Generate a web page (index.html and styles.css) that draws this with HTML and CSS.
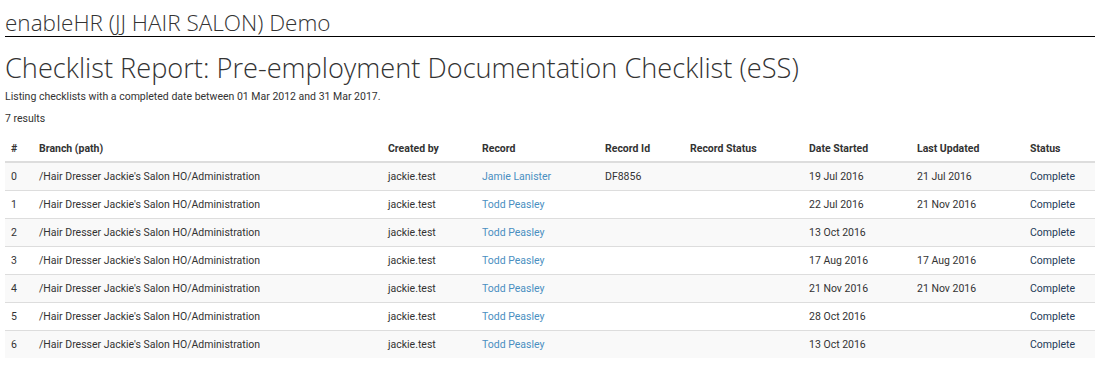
FILE: index.html
```html
<!DOCTYPE html>
<html>
<head>
<meta charset="utf-8">
<link rel="stylesheet" href="styles.css">
</head>
<body>
<h1 class="site-title">enableHR (JJ HAIR SALON) Demo</h1>
<h2 class="report-title">Checklist Report: Pre-employment Documentation Checklist (eSS)</h2>
<p class="desc">Listing checklists with a completed date between 01 Mar 2012 and 31 Mar 2017.</p>
<p class="count">7 results</p>
<table class="report">
<thead>
<tr>
<th class="c-num">#</th>
<th class="c-branch">Branch (path)</th>
<th class="c-created">Created by</th>
<th class="c-record">Record</th>
<th class="c-recid">Record Id</th>
<th class="c-recstatus">Record Status</th>
<th class="c-started">Date Started</th>
<th class="c-updated">Last Updated</th>
<th class="c-status">Status</th>
</tr>
</thead>
<tbody>
<tr><td>0</td><td>/Hair Dresser Jackie's Salon HO/Administration</td><td>jackie.test</td><td><a class="rec">Jamie Lanister</a></td><td>DF8856</td><td></td><td>19 Jul 2016</td><td>21 Jul 2016</td><td><a class="st">Complete</a></td></tr>
<tr><td>1</td><td>/Hair Dresser Jackie's Salon HO/Administration</td><td>jackie.test</td><td><a class="rec">Todd Peasley</a></td><td></td><td></td><td>22 Jul 2016</td><td>21 Nov 2016</td><td><a class="st">Complete</a></td></tr>
<tr><td>2</td><td>/Hair Dresser Jackie's Salon HO/Administration</td><td>jackie.test</td><td><a class="rec">Todd Peasley</a></td><td></td><td></td><td>13 Oct 2016</td><td></td><td><a class="st">Complete</a></td></tr>
<tr><td>3</td><td>/Hair Dresser Jackie's Salon HO/Administration</td><td>jackie.test</td><td><a class="rec">Todd Peasley</a></td><td></td><td></td><td>17 Aug 2016</td><td>17 Aug 2016</td><td><a class="st">Complete</a></td></tr>
<tr><td>4</td><td>/Hair Dresser Jackie's Salon HO/Administration</td><td>jackie.test</td><td><a class="rec">Todd Peasley</a></td><td></td><td></td><td>21 Nov 2016</td><td>21 Nov 2016</td><td><a class="st">Complete</a></td></tr>
<tr><td>5</td><td>/Hair Dresser Jackie's Salon HO/Administration</td><td>jackie.test</td><td><a class="rec">Todd Peasley</a></td><td></td><td></td><td>28 Oct 2016</td><td></td><td><a class="st">Complete</a></td></tr>
<tr><td>6</td><td>/Hair Dresser Jackie's Salon HO/Administration</td><td>jackie.test</td><td><a class="rec">Todd Peasley</a></td><td></td><td></td><td>13 Oct 2016</td><td></td><td><a class="st">Complete</a></td></tr>
</tbody>
</table>
</body>
</html>
```
FILE: styles.css
```css
html, body { margin: 0; padding: 0; background: #fff; }
body {
  padding: 0 0 0 5px;
  font-family: Roboto, "Liberation Sans", sans-serif;
  font-size: 10.5px;
  color: #333;
}
.site-title {
  margin: 0;
  padding-top: 9px;
  font-family: "Open Sans", sans-serif;
  font-weight: 300;
  font-size: 22.5px;
  line-height: 27px;
  color: #333;
  border-bottom: 1px solid #000;
}
.report-title {
  margin: 14px 0 0;
  font-family: "Open Sans", sans-serif;
  font-weight: 300;
  font-size: 27.2px;
  line-height: 34px;
  color: #333;
}
.desc { margin: 4px 0 0; line-height: 15px; }
.count { margin: 7px 0 0; line-height: 15px; }
.report {
  margin-top: 8px;
  width: 1090px;
  border-collapse: collapse;
}
.report th {
  text-align: left;
  font-weight: 700;
  color: #333;
  padding: 8px 6px 5px;
  line-height: 14px;
  border-bottom: 2px solid #ddd;
}
.report td {
  padding: 0 6px;
  height: 27px;
  line-height: 14px;
  border-top: 1px solid #ddd;
  color: #333;
}
.report tbody tr:first-child td { border-top: 0; }
.report tbody tr:nth-child(odd) { background: #f9f9f9; }
.c-num { width: 16px; }
.c-branch { width: 337px; }
.c-created { width: 82px; }
.c-record { width: 111px; }
.c-recid { width: 73px; }
.c-recstatus { width: 107px; }
.c-started { width: 96px; }
.c-updated { width: 101px; }
a.rec { color: #4a8fc1; text-decoration: none; }
a.st { color: #243a57; text-decoration: none; }
```
